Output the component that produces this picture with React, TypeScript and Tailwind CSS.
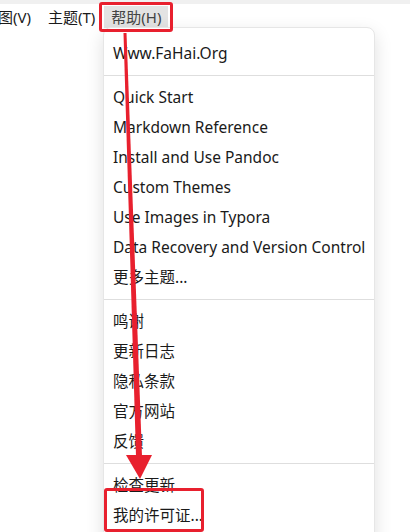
import React from 'react';

type Entry = { label: string } | { sep: true };

const entries: Entry[] = [
    { label: 'Www.FaHai.Org' },
    { sep: true },
    { label: 'Quick Start' },
    { label: 'Markdown Reference' },
    { label: 'Install and Use Pandoc' },
    { label: 'Custom Themes' },
    { label: 'Use Images in Typora' },
    { label: 'Data Recovery and Version Control' },
    { label: '更多主题...' },
    { sep: true },
    { label: '鸣谢' },
    { label: '更新日志' },
    { label: '隐私条款' },
    { label: '官方网站' },
    { label: '反馈' },
    { sep: true },
    { label: '检查更新' },
    { label: '我的许可证...' },
];

const font = { fontFamily: '"Noto Sans", "Noto Sans CJK SC", sans-serif' };

const App: React.FC = () => {
    return (
        <div className="relative w-[410px] h-[532px] overflow-hidden bg-white text-[15px] text-[#1a1a1a]" style={font}>
            {/* Window strip */}
            <div className="h-[4px] bg-[#f0f0f0]" />

            {/* Menu bar */}
            <div className="flex items-center h-[26px] text-[15px]">
                <span className="pl-0 pr-[17px] -ml-[2px]">图(V)</span>
                <span className="pr-[8px]">主题(T)</span>
                <span className="ml-[1px] px-[7px] h-[22px] flex items-center bg-[#e3e3e3] text-[#444]">帮助(H)</span>
            </div>

            {/* Dropdown */}
            <div className="absolute left-[103px] top-[27px] w-[272px] bg-white rounded-[8px] border border-[#e6e6e6] shadow-[0_6px_18px_rgba(0,0,0,0.13)] pt-[11px] pb-[20px] text-[15.5px]">
                {entries.map((e, i) =>
                    'sep' in e ? (
                        <div key={i} className="h-px bg-[#dedede] mt-[6px] mb-[7px]" />
                    ) : (
                        <div key={i} className="h-[30px] flex items-center pl-[9px] whitespace-nowrap">
                            {e.label}
                        </div>
                    )
                )}
            </div>

            {/* Annotations */}
            <div className="absolute left-[99px] top-[2px] w-[74px] h-[30px] border-[3px] border-[#e8202e] rounded-[3px]" />
            <div className="absolute left-[104px] top-[488px] w-[100px] h-[44px] border-[3px] border-[#e8202e] rounded-[3px]" />
            <svg className="absolute left-0 top-0" width="410" height="532" viewBox="0 0 410 532">
                <polygon points="123.5,33 126.5,33 142,456 136,456" fill="#e8202e" />
                <polygon points="126,455 152,455 140,479" fill="#e8202e" />
            </svg>
        </div>
    );
};

export default App;
